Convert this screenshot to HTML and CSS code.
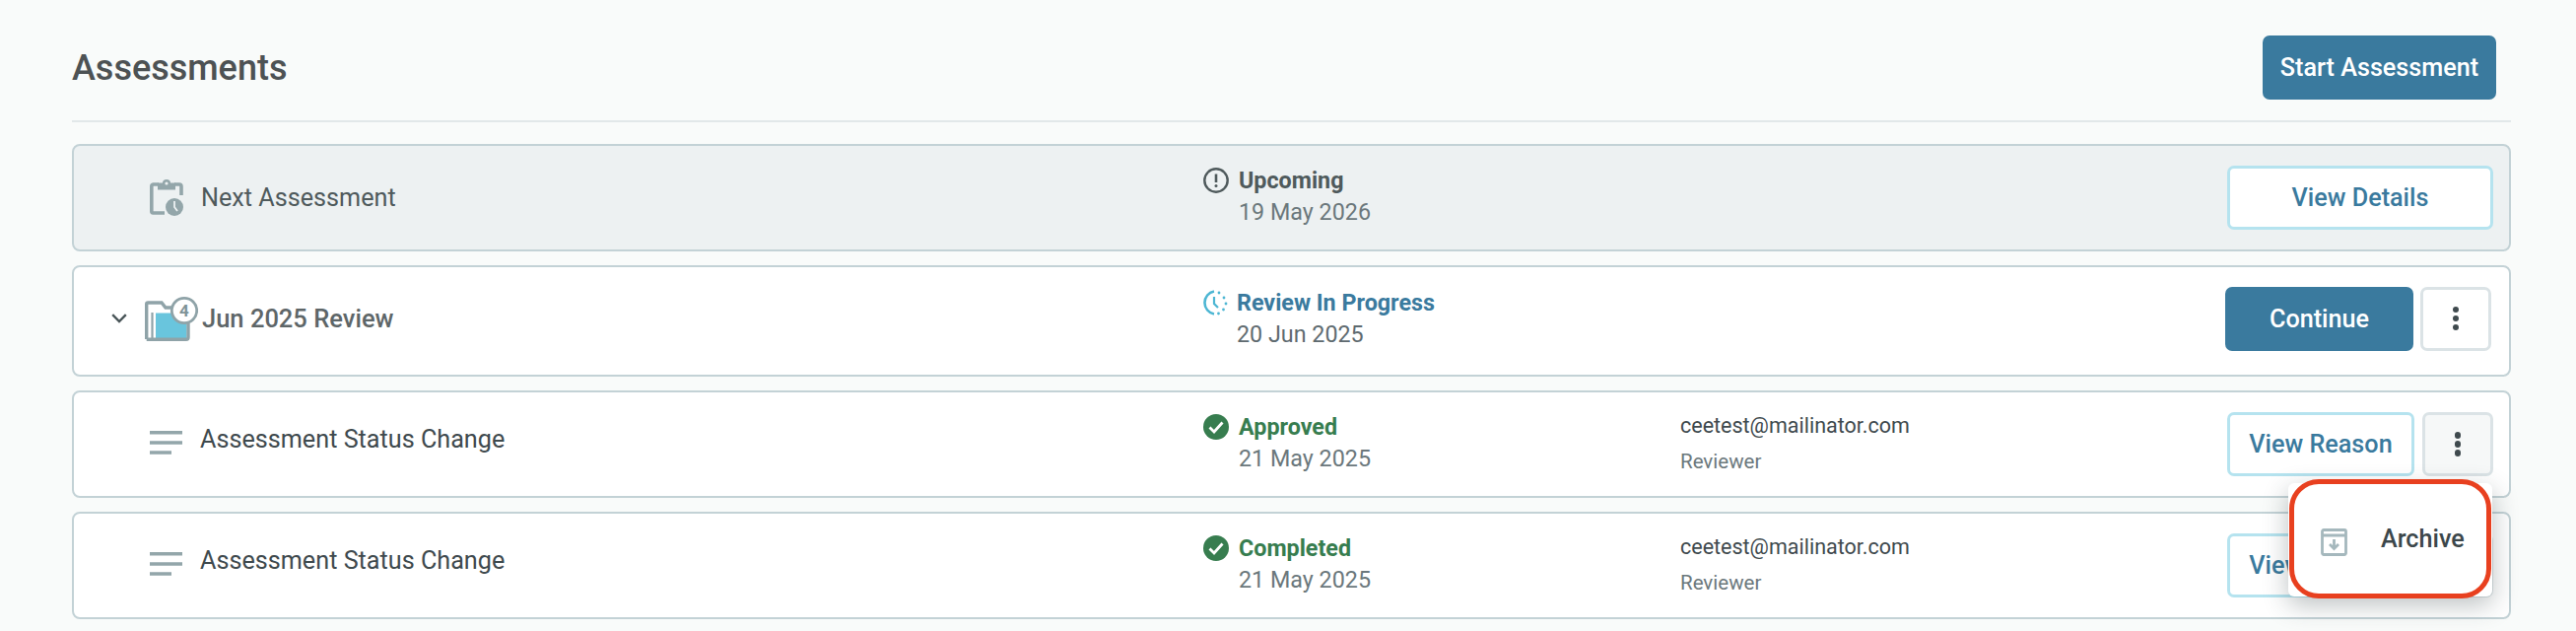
FILE: index.html
```
<!DOCTYPE html>
<html lang="en">
<head>
<meta charset="utf-8">
<title>Assessments</title>
<link rel="stylesheet" href="styles.css">
</head>
<body>
<main class="page">
  <header class="head">
    <h1 class="title">Assessments</h1>
    <button class="btn btn-solid btn-start">Start Assessment</button>
  </header>
  <section class="list">
    <article class="card card-muted">
      <div class="name">
        <svg class="ico-clip" viewBox="0 0 34 37"><path d="M9 5H3.500A2 2 0 0 0 1.800 7V32A2 2 0 0 0 3.500 34H15" fill="none" stroke="#93a6aa" stroke-width="3.600"/><path d="M25 5H30A2 2 0 0 1 32 7V16" fill="none" stroke="#93a6aa" stroke-width="3.600"/><path d="M8 3.500H13A4 3.500 0 0 1 21 3.500H26V10.500H8Z" fill="#93a6aa"/><circle cx="17" cy="4" r="1.600" fill="#edf1f2"/><circle cx="25" cy="28" r="9" fill="#93a6aa"/><path d="M25 22V28L28 32" fill="none" stroke="#edf1f2" stroke-width="1.800"/></svg>
        <span class="label">Next Assessment</span>
      </div>
      <div class="status">
        <svg class="ico-st" viewBox="0 0 26 26"><circle cx="13" cy="13" r="11.700" fill="none" stroke="#4f5a5c" stroke-width="2.400"/><path d="M13 6.500V15" stroke="#4f5a5c" stroke-width="2.600"/><circle cx="13" cy="18.500" r="1.500" fill="#4f5a5c"/></svg>
        <div><div class="st st-dark">Upcoming</div><div class="date">19 May 2026</div></div>
      </div>
      <div class="person"></div>
      <div class="actions"><button class="btn btn-line btn-details">View Details</button></div>
    </article>

    <article class="card card-tall">
      <div class="name name-group">
        <svg class="ico-chev" viewBox="0 0 16 10"><path d="M1.200 1.200L8 8L14.800 1.200" fill="none" stroke="#4a5659" stroke-width="2.400"/></svg>
        <svg class="ico-folder" viewBox="0 0 54 46"><path d="M1.700 44V8.500A1.500 1.500 0 0 1 3.200 7H17L21 12H34" fill="none" stroke="#8fa3a8" stroke-width="3.400"/><path d="M7.500 44V17" fill="none" stroke="#8fa3a8" stroke-width="2.200"/><path d="M11 17.500H42.500V43H11Z" fill="#69c5dd"/><path d="M1.700 44.300H42A2 2 0 0 0 44 42.300V28" fill="none" stroke="#8fa3a8" stroke-width="3.400"/><circle cx="40" cy="15" r="12.700" fill="#fff" stroke="#8fa3a8" stroke-width="2.800"/><text class="badge-num" x="40" y="21" text-anchor="middle">4</text></svg>
        <span class="label label-strong">Jun 2025 Review</span>
      </div>
      <div class="status status-tight">
        <svg class="ico-st ico-prog" viewBox="0 0 28 26"><path d="M14 1.500A11.700 11.700 0 0 0 14 24.500" fill="none" stroke="#4db6d3" stroke-width="2.600"/><circle cx="19" cy="3" r="1.400" fill="#4db6d3"/><circle cx="24" cy="8" r="1.400" fill="#4db6d3"/><circle cx="26" cy="14" r="1.400" fill="#4db6d3"/><circle cx="23.500" cy="20" r="1.400" fill="#4db6d3"/><circle cx="18.500" cy="24" r="1.400" fill="#4db6d3"/><path d="M14 7V14L18 18" fill="none" stroke="#4db6d3" stroke-width="2.200"/></svg>
        <div><div class="st st-blue">Review In Progress</div><div class="date date-dark">20 Jun 2025</div></div>
      </div>
      <div class="person"></div>
      <div class="actions actions-group">
        <button class="btn btn-solid btn-continue">Continue</button>
        <button class="btn btn-more" aria-label="More"><span class="dots"></span></button>
      </div>
    </article>

    <article class="card">
      <div class="name name-item">
        <svg class="ico-lines" viewBox="0 0 33 24"><path d="M0 1.700H33M0 12H33M0 22H22" stroke="#93a6aa" stroke-width="3.400"/></svg>
        <span class="label label-dark">Assessment Status Change</span>
      </div>
      <div class="status">
        <svg class="ico-st" viewBox="0 0 26 26"><circle cx="13" cy="13" r="13" fill="#377d4f"/><path d="M6.500 13.500L11 18L19.500 8.500" fill="none" stroke="#fff" stroke-width="2.800"/></svg>
        <div><div class="st st-green">Approved</div><div class="date">21 May 2025</div></div>
      </div>
      <div class="person"><div class="email">ceetest@mailinator.com</div><div class="role">Reviewer</div></div>
      <div class="actions">
        <button class="btn btn-line btn-reason">View Reason</button>
        <div class="more-wrap">
          <button class="btn btn-more btn-more-open" aria-label="More"><span class="dots"></span></button>
          <div class="menu">
            <svg class="ico-arch" viewBox="0 0 27 28"><path d="M3 1.500H24A1.500 1.500 0 0 1 25.500 3V25A1.500 1.500 0 0 1 24 26.500H3A1.500 1.500 0 0 1 1.500 25V3A1.500 1.500 0 0 1 3 1.500Z M1.500 7H25.500" fill="none" stroke="#a5b8bd" stroke-width="2.800"/><path d="M13.500 11V20M9 16L13.500 20.500L18 16" fill="none" stroke="#a5b8bd" stroke-width="2.800"/></svg>
            <span class="menu-text">Archive</span>
            <div class="highlight"></div>
          </div>
        </div>
      </div>
    </article>

    <article class="card">
      <div class="name name-item">
        <svg class="ico-lines" viewBox="0 0 33 24"><path d="M0 1.700H33M0 12H33M0 22H22" stroke="#93a6aa" stroke-width="3.400"/></svg>
        <span class="label label-dark">Assessment Status Change</span>
      </div>
      <div class="status">
        <svg class="ico-st" viewBox="0 0 26 26"><circle cx="13" cy="13" r="13" fill="#377d4f"/><path d="M6.500 13.500L11 18L19.500 8.500" fill="none" stroke="#fff" stroke-width="2.800"/></svg>
        <div><div class="st st-green">Completed</div><div class="date">21 May 2025</div></div>
      </div>
      <div class="person"><div class="email">ceetest@mailinator.com</div><div class="role">Reviewer</div></div>
      <div class="actions">
        <button class="btn btn-line btn-reason">View Reason</button>
        <div class="more-wrap"><button class="btn btn-more" aria-label="More"><span class="dots"></span></button></div>
      </div>
    </article>
  </section>
</main>
</body>
</html>
```
FILE: styles.css
```
* { box-sizing: border-box; }
html, body { margin: 0; height: 640px; overflow: hidden; }
body { background: #f9fbfa; font-family: Roboto, "Liberation Sans", sans-serif; color: #4f5a5c; }
.page { padding: 37px 66px 0 73px; }

.head { display: flex; justify-content: space-between; align-items: center; height: 87px; padding: 0 15px 22px 0; border-bottom: 2px solid #e2e8e9; }
.title { margin: 0; font-size: 36px; font-weight: 500; color: #4d5254; }

.list { display: flex; flex-direction: column; gap: 14px; margin-top: 22px; }
.card { display: grid; grid-template-columns: 1144px 484px 1fr auto; align-items: center; height: 109px; padding: 0 16px 0 2px; background: #fff; border: 2px solid #c3d2d6; border-radius: 8px; }
.card-muted { background: #edf1f2; }
.card-tall { height: 113px; padding-right: 18px; }

.name { display: flex; align-items: center; gap: 18px; padding-left: 75px; }
.name-group { padding-left: 36px; gap: 0; margin-top: -6px; }
.name-item { margin-top: -3px; }
.label { font-size: 25.200px; color: #4f5a5c; }
.label-strong { font-weight: 500; color: #5e6668; margin-left: 4px; font-size: 25.500px; }
.label-dark { color: #3f4a4e; margin-bottom: 7px; }
.ico-clip { width: 34px; height: 37px; }
.ico-lines { width: 33px; height: 24px; }
.ico-chev { width: 16px; height: 10px; margin-right: 18px; }
.ico-folder { width: 54px; height: 46px; }

.status { display: flex; align-items: flex-start; gap: 10px; margin-top: -3px; }
.status-tight { gap: 9px; margin-left: -3px; margin-top: -5px; }
.ico-st { width: 26px; height: 26px; flex: none; margin-top: 3px; }
.ico-prog { width: 28px; }
.st { font-size: 23.300px; font-weight: 700; line-height: 32px; }
.st-dark { color: #4f5a5c; }
.st-blue { color: #3a7a9e; }
.st-green { color: #377d4f; }
.date { font-size: 23.300px; line-height: 33px; color: #6b787c; }
.date-dark { color: #5f6b70; }

.person { margin-top: -2px; }
.email { font-size: 21.500px; line-height: 36px; color: #3f4a4e; }
.role { font-size: 20.500px; line-height: 36px; color: #6b787c; }

.actions { display: flex; justify-content: flex-end; align-items: center; gap: 8px; }
.actions-group { margin-top: -5px; gap: 7px; }
.btn { font-family: inherit; font-size: 25.200px; font-weight: 500; height: 65px; border-radius: 7px; padding: 0; cursor: pointer; }
.btn-solid { background: #3a7a9e; color: #fff; border: 0; }
.btn-start { width: 237px; flex: none; }
.btn-continue { width: 191px; }
.btn-line { background: #fff; color: #3a7a9e; border: 3px solid #b5e3ef; }
.btn-details { width: 270px; }
.btn-reason { width: 190px; }
.btn-more { width: 72px; background: #fff; border: 3px solid #dbe3e6; display: flex; align-items: center; justify-content: center; }
.btn-more-open { background: #f6f8f8; }
.dots { display: block; width: 6.500px; height: 6.500px; border-radius: 50%; background: #3f4a4e; box-shadow: 0 -9px 0 #3f4a4e, 0 9px 0 #3f4a4e; }
.more-wrap { position: relative; }

.menu { position: absolute; top: 72px; right: 1px; z-index: 5; display: flex; align-items: center; width: 207px; height: 115px; padding-left: 33px; background: #fff; border-radius: 6px; box-shadow: 0 8px 26px rgba(40, 55, 60, 0.32); }
.ico-arch { width: 27px; height: 28px; margin-top: 4px; }
.menu-text { margin-left: 34px; font-size: 25.200px; font-weight: 500; color: #3c474b; margin-top: -2px; }
.highlight { position: absolute; left: 1px; right: 1px; top: -4px; bottom: -2px; border: 5px solid #e8401f; border-radius: 30px; }
.badge-num { font-family: Roboto, "Liberation Sans", sans-serif; font-size: 17px; font-weight: 700; fill: #7f9398; }
```
